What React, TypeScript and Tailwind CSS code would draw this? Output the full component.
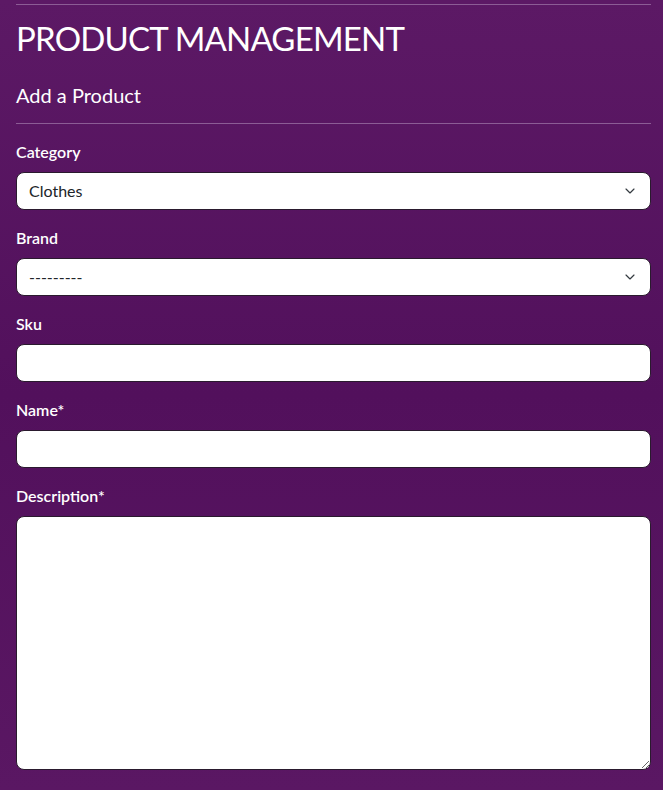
import { ChevronDown } from 'lucide-react'

type Field = {
  label: string
  kind: 'select' | 'input' | 'textarea'
  value?: string
}

const FIELDS: Field[] = [
  { label: 'Category', kind: 'select', value: 'Clothes' },
  { label: 'Brand', kind: 'select', value: '---------' },
  { label: 'Sku', kind: 'input' },
  { label: 'Name*', kind: 'input' },
  { label: 'Description*', kind: 'textarea' },
]

const boxClass =
  'w-full rounded-lg border border-[#2a1a2e] bg-white px-3 text-base text-[#212529] outline-none'

function FormField({ field }: { field: Field }) {
  return (
    <div className="mb-4 flex flex-col">
      <label className="mb-2 text-base leading-6 font-semibold text-white">{field.label}</label>
      {field.kind === 'select' && (
        <div className="relative">
          <select defaultValue={field.value} className={`${boxClass} h-[38px] appearance-none pr-10`}>
            <option>{field.value}</option>
          </select>
          <ChevronDown
            className="pointer-events-none absolute top-1/2 right-[13px] h-4 w-4 -translate-y-1/2 text-[#343a40]"
            strokeWidth={1.75}
          />
        </div>
      )}
      {field.kind === 'input' && <input type="text" className={`${boxClass} h-[38px]`} />}
      {field.kind === 'textarea' && <textarea className={`${boxClass} h-[254px] py-1.5`} />}
    </div>
  )
}

export default function App() {
  return (
    <div
      className="min-h-screen bg-gradient-to-b from-[#5c1965] via-[#52105c] to-[#5a1763] pt-1 pr-3 pl-4"
      style={{ fontFamily: 'Lato, "Open Sans", sans-serif' }}
    >
      <div className="border-t border-[#8c5c95]" />
      <h1 className="mt-[14px] text-[33px] leading-[1.2] font-normal tracking-[-0.8px] text-white">
        PRODUCT MANAGEMENT
      </h1>
      <h2 className="mt-6 text-[20px] leading-[1.2] font-normal text-white">Add a Product</h2>
      <div className="mt-4 border-t border-[#8c5c95]" />
      <form className="pt-4">
        {FIELDS.map((field) => (
          <FormField key={field.label} field={field} />
        ))}
      </form>
    </div>
  )
}
